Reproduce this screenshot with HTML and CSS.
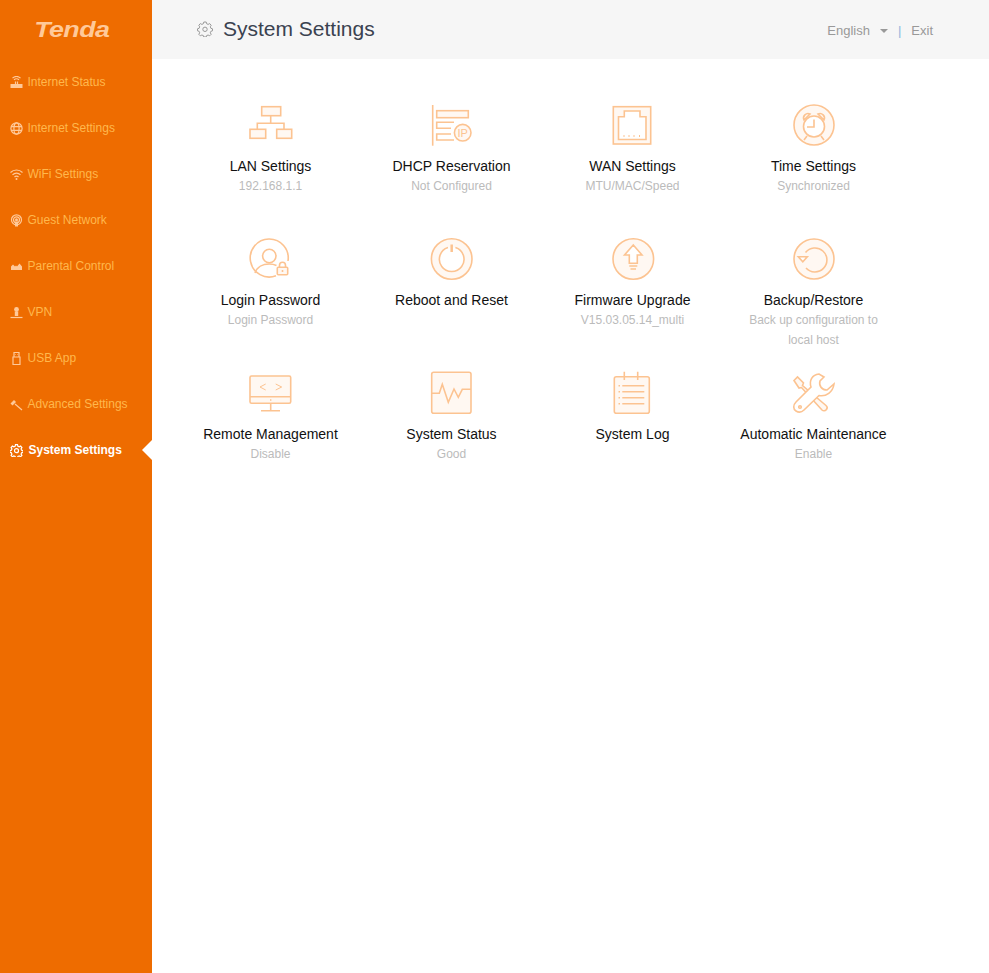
FILE: index.html
```html
<!DOCTYPE html>
<html>
<head>
  <link rel="stylesheet" href="styles.css">
  <title>Tenda - System Settings</title>
</head>
<body>
  <div class="sidebar">
    <div class="logo"><span class="logo-text">Tenda</span></div>
    <ul class="nav">
      <li class="nav-item">
        <svg class="nav-icon" viewBox="0 0 13 13"><path class="solid" d="M0.500 8h12v4h-12z"/><path d="M5.500 8V5.500M7.500 8V5.500M4 3.800a3.500 3.500 0 0 1 5 0M2.500 2.200a5.500 5.500 0 0 1 8 0"/></svg>
        <span>Internet Status</span>
      </li>
      <li class="nav-item">
        <svg class="nav-icon" viewBox="0 0 13 13"><circle cx="6.500" cy="6.500" r="5.600"/><ellipse cx="6.500" cy="6.500" rx="2.600" ry="5.600"/><path d="M1 4.600h11M1 8.400h11"/></svg>
        <span>Internet Settings</span>
      </li>
      <li class="nav-item">
        <svg class="nav-icon" viewBox="0 0 13 13"><path d="M0.500 4.500a8.500 8.500 0 0 1 12 0M2.500 6.800a5.600 5.600 0 0 1 8 0M4.500 9a2.800 2.800 0 0 1 4 0"/><circle class="solid" cx="6.500" cy="11" r="1"/></svg>
        <span>WiFi Settings</span>
      </li>
      <li class="nav-item">
        <svg class="nav-icon" viewBox="0 0 13 13"><circle cx="6.500" cy="5.800" r="5"/><circle cx="6.500" cy="5.800" r="3"/><circle class="solid" cx="6.500" cy="5.800" r="1.500"/><path class="solid" d="M5 7.500h3v5h-3z"/></svg>
        <span>Guest Network</span>
      </li>
      <li class="nav-item">
        <svg class="nav-icon" viewBox="0 0 13 13"><path class="solid" d="M1 10V6.500l2-2 2 2 1-1 1 1 2.500-3 2.500 3V10z"/></svg>
        <span>Parental Control</span>
      </li>
      <li class="nav-item">
        <svg class="nav-icon" viewBox="0 0 13 13"><circle class="solid" cx="6.500" cy="3.500" r="2.400"/><path class="solid" d="M4.800 5.500h3.400v4.500h-3.400z"/><path d="M0.500 11.500h12"/></svg>
        <span>VPN</span>
      </li>
      <li class="nav-item">
        <svg class="nav-icon" viewBox="0 0 13 13"><path d="M4 0.500h5v4.500h-5zM3 5h7v7.500h-7z"/><path d="M5.500 2.500h0.500M7.500 2.500h0.500"/></svg>
        <span>USB App</span>
      </li>
      <li class="nav-item">
        <svg class="nav-icon" viewBox="0 0 13 13"><path class="solid" d="M0.500 5.500l3.500-3.500 2 2-3.500 3.500z"/><path d="M5 6l7 6"/></svg>
        <span>Advanced Settings</span>
      </li>
      <li class="nav-item active">
        <svg class="nav-icon" viewBox="0 0 13 13"><path d="M5.500 0.700h2l0.400 1.500 1.300 0.600 1.400-0.700 1.300 1.500-0.800 1.300 0.500 1.300 1.500 0.400v1.800l-1.500 0.400-0.500 1.300 0.800 1.300-1.300 1.300-1.400-0.700-1.300 0.500-0.400 1.200h-2l-0.400-1.200-1.300-0.500-1.400 0.700-1.300-1.300 0.800-1.300-0.500-1.300-1.500-0.400v-1.800l1.500-0.400 0.500-1.300-0.800-1.300 1.300-1.500 1.400 0.700 1.300-0.600z"/><circle cx="6.500" cy="6.700" r="2"/></svg>
        <span>System Settings</span>
      </li>
    </ul>
  </div>

  <div class="main">
    <div class="topbar">
      <div class="page-title">
        <svg class="title-icon" viewBox="0 0 16 16"><path d="M6.800 1h2.400l0.400 1.700 1.500 0.700 1.600-0.800 1.500 1.700-0.900 1.500 0.600 1.500 1.600 0.500v2l-1.600 0.500-0.600 1.500 0.900 1.500-1.500 1.500-1.600-0.800-1.500 0.600-0.400 1.400h-2.400l-0.400-1.400-1.500-0.600-1.600 0.800-1.500-1.500 0.900-1.500-0.600-1.500-1.600-0.500v-2l1.600-0.500 0.600-1.500-0.900-1.500 1.500-1.700 1.600 0.800 1.500-0.700z"/><circle cx="8" cy="8.300" r="2.200"/></svg>
        <span>System Settings</span>
      </div>
      <div class="topbar-right">
        <span>English</span>
        <span class="caret"></span>
        <span class="divider">|</span>
        <span>Exit</span>
      </div>
    </div>

    <div class="settings-grid">
      <div class="setting">
        <svg class="setting-icon" viewBox="0 0 45 45"><rect class="tint" x="13.700" y="3.700" width="19" height="9"/><rect class="tint" x="2" y="26.300" width="15.700" height="9"/><rect class="tint" x="28.700" y="26.300" width="15" height="9"/><path d="M22.700 12.700v7.600M9.300 26.300v-6h26.700v6"/></svg>
        <div class="setting-name">LAN Settings</div>
        <div class="setting-info">192.168.1.1</div>
      </div>
      <div class="setting">
        <svg class="setting-icon" viewBox="0 0 45 45"><path d="M3.700 2v40.700"/><rect class="tint" x="7.700" y="7.700" width="31.600" height="7"/><path d="M25 19.300H7.700v6H22M22 31H7.700v6H25"/><circle class="tint" cx="33.700" cy="29.700" r="8.300"/><text class="icon-text" x="33.700" y="33.800">IP</text></svg>
        <div class="setting-name">DHCP Reservation</div>
        <div class="setting-info">Not Configured</div>
      </div>
      <div class="setting">
        <svg class="setting-icon" viewBox="0 0 45 45"><rect class="tint" x="3.300" y="3.700" width="37.400" height="37.300"/><path class="white" d="M8.500 36.500V13.800h5.800V8h15.700v5.800h6v22.700z"/><path class="thin" d="M14 34v-2M19 34v-2M24 34v-2M29.500 34v-2"/></svg>
        <div class="setting-name">WAN Settings</div>
        <div class="setting-info">MTU/MAC/Speed</div>
      </div>
      <div class="setting">
        <svg class="setting-icon" viewBox="0 0 45 45"><circle class="tint" cx="23" cy="22" r="20"/><circle class="white" cx="23" cy="23.500" r="10.500"/><path d="M23 16.500v7.500h-7M16 33l-3 4M30 33l3 4"/><path class="tint" d="M13 17a4.500 4.500 0 0 1 6-6zM33 17a4.500 4.500 0 0 0-6-6z"/></svg>
        <div class="setting-name">Time Settings</div>
        <div class="setting-info">Synchronized</div>
      </div>

      <div class="setting">
        <svg class="setting-icon" viewBox="0 0 45 45"><path d="M28 38.800A19 19 0 1 1 40 24"/><circle cx="21.300" cy="19" r="6.700"/><path d="M7 36c2-6 8-9 14.300-9 2.500 0 5 0.500 7.200 1.500"/><rect class="tint" x="29.300" y="30.300" width="10.400" height="7.500" rx="1"/><path d="M31.500 30.300v-2a3 3 0 0 1 6 0v2M34.500 33v2"/></svg>
        <div class="setting-name">Login Password</div>
        <div class="setting-info">Login Password</div>
      </div>
      <div class="setting">
        <svg class="setting-icon" viewBox="0 0 45 45"><circle class="tint" cx="22.700" cy="22" r="20.300"/><path class="white" d="M19 10.500a12.300 12.300 0 1 0 7.400 0"/><path class="thick" d="M22.700 7.500v7.500"/></svg>
        <div class="setting-name">Reboot and Reset</div>
        <div class="setting-info"></div>
      </div>
      <div class="setting">
        <svg class="setting-icon" viewBox="0 0 45 45"><circle class="tint" cx="23.300" cy="22" r="20.300"/><path class="white" d="M23.300 8l8.700 10h-4.700v8.300h-8V18H14.500z"/><path d="M19.300 29h8M20.500 32h5.500"/></svg>
        <div class="setting-name">Firmware Upgrade</div>
        <div class="setting-info">V15.03.05.14_multi</div>
      </div>
      <div class="setting">
        <svg class="setting-icon" viewBox="0 0 45 45"><circle class="tint" cx="23" cy="22" r="20"/><path d="M14.500 15.500A12 12 0 1 1 15 31"/><path class="white" d="M7.300 19.700h9l-4.500 5z"/></svg>
        <div class="setting-name">Backup/Restore</div>
        <div class="setting-info">Back up configuration to local host</div>
      </div>

      <div class="setting">
        <svg class="setting-icon" viewBox="0 0 45 45"><rect class="tint" x="2" y="5" width="40.700" height="27.300" rx="1.500"/><path d="M2 25.700h40.700M22.700 32.300v7.400M13 39.700h19M22 29h1.400"/><path class="thin" d="M17.700 13l-5.700 3 5.700 3M27.700 13l6 3-6 3"/></svg>
        <div class="setting-name">Remote Management</div>
        <div class="setting-info">Disable</div>
      </div>
      <div class="setting">
        <svg class="setting-icon" viewBox="0 0 45 45"><rect class="tint" x="2.700" y="1.300" width="39.300" height="41" rx="2"/><path d="M2.700 22.300h7.600l3-9 6 18 5.700-13.300 4.300 8.300 4-8H42"/></svg>
        <div class="setting-name">System Status</div>
        <div class="setting-info">Good</div>
      </div>
      <div class="setting">
        <svg class="setting-icon" viewBox="0 0 45 45"><rect class="tint" x="4.300" y="5.700" width="35" height="36.600" rx="2"/><path d="M14.300 0.700V9M27.700 0.700V9M12.300 14.700h22M12.300 20.700h22M12.300 26.700h22M12.300 32.700h22M8.500 14.700h1.500M8.500 20.700h1.500M8.500 26.700h1.500M8.500 32.700h1.500"/></svg>
        <div class="setting-name">System Log</div>
        <div class="setting-info"></div>
      </div>
      <div class="setting">
        <svg class="setting-icon" viewBox="0 0 45 45"><path class="tint" d="M3 9.500l3.500-3.500 6 6-1 2.500 23.500 20a3 3 0 0 1-4 4.500L10.500 16.500 8 17z"/><path class="white" d="M28 3C21 3.500 18 10 20 16L5 31C2 34 2 38 5 40C8 42 11 41 13 39L28 24.500C35 26 42 21 43 13L36 19C31 19 27.500 15 29 10L33 6z"/><circle cx="9" cy="36" r="1.300"/></svg>
        <div class="setting-name">Automatic Maintenance</div>
        <div class="setting-info">Enable</div>
      </div>
    </div>
  </div>
</body>
</html>
```

FILE: styles.css
```css
* {
  box-sizing: border-box;
}

html, body {
  height: 100%;
}

body {
  margin: 0;
  display: flex;
  font-family: "Liberation Sans", Arial, sans-serif;
  background-color: #ffffff;
  overflow: hidden;
}

.sidebar {
  width: 152px;
  flex-shrink: 0;
  background-color: #ee6c00;
}

.logo {
  height: 59px;
  display: flex;
  justify-content: center;
  align-items: center;
}

.logo-text {
  font-size: 22px;
  font-weight: bold;
  font-style: italic;
  color: #ffc999;
  letter-spacing: -0.5px;
  transform: scaleX(1.22);
  margin-left: -8px;
  padding-top: 1px;
}

.nav {
  list-style: none;
  margin: 0;
  padding: 0;
}

.nav-item {
  position: relative;
  height: 46px;
  display: flex;
  align-items: center;
  gap: 5px;
  padding-left: 9.500px;
  font-size: 12px;
  color: #ffb84d;
}

.nav-icon {
  width: 13px;
  height: 13px;
  flex-shrink: 0;
  fill: none;
  stroke: #ffc999;
  stroke-width: 1.200;
}

.nav-icon .solid {
  fill: #ffc999;
  stroke: none;
}

.nav-item.active {
  gap: 6px;
  color: #ffffff;
  font-weight: bold;
}

.nav-item.active .nav-icon {
  stroke: #ffffff;
}

.nav-item.active::after {
  content: "";
  position: absolute;
  right: 0;
  top: 13px;
  border-style: solid;
  border-width: 10px 10px 10px 0;
  border-color: transparent #ffffff transparent transparent;
}

.main {
  flex: 1;
  min-width: 0;
}

.topbar {
  height: 59px;
  padding: 0 56px 0 45px;
  display: flex;
  justify-content: space-between;
  align-items: center;
  background-color: #f6f6f6;
}

.page-title {
  display: flex;
  align-items: center;
  gap: 10px;
  padding-bottom: 2px;
  font-size: 21px;
  color: #3a4250;
}

.title-icon {
  width: 16px;
  height: 16px;
  fill: none;
  stroke: #999999;
  stroke-width: 1;
}

.topbar-right {
  display: flex;
  align-items: center;
  padding-top: 2px;
  font-size: 13px;
  color: #999999;
}

.caret {
  margin-left: 10px;
  border-style: solid;
  border-width: 4px 4px 0 4px;
  border-color: #999999 transparent transparent transparent;
}

.divider {
  margin: 0 10px 0 10px;
  color: #8fb5dd;
}

.settings-grid {
  display: grid;
  grid-template-columns: repeat(4, 181px);
  grid-auto-rows: 134px;
  padding: 44px 0 0 28px;
}

.setting {
  text-align: center;
}

.setting-icon {
  display: block;
  width: 45px;
  height: 45px;
  margin: 0 auto 8px;
  fill: none;
  stroke: #fcc391;
  stroke-width: 1.600;
}

.setting-icon .tint {
  fill: #fff8f2;
}

.setting-icon .white {
  fill: #ffffff;
}

.setting-icon .thick {
  stroke-width: 2.500;
}

.setting-icon .thin {
  stroke-width: 1;
}

.setting-icon .icon-text {
  fill: #fcc391;
  stroke: none;
  font-size: 11px;
  text-anchor: middle;
}

.setting-name {
  font-size: 14px;
  line-height: 20px;
  color: #111111;
}

.setting-info {
  padding: 0 20px;
  font-size: 12px;
  line-height: 20px;
  color: #bbbbbb;
}
```
